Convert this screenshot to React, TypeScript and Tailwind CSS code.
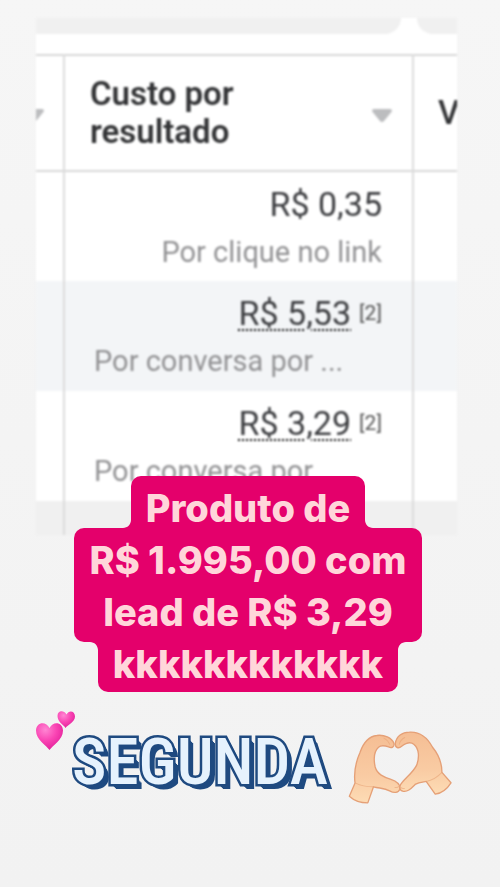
import React from 'react';

interface ResultRow {
  value: string;
  note?: string;
  description: string;
  truncated: boolean;
}

const ROWS: ResultRow[] = [
  { value: 'R$ 0,35', description: 'Por clique no link', truncated: false },
  { value: 'R$ 5,53', note: '[2]', description: 'Por conversa por ...', truncated: true },
  { value: 'R$ 3,29', note: '[2]', description: 'Por conversa por ...', truncated: true }
];

const SortArrow: React.FC = () => (
  <svg viewBox="0 0 20 13" className="mt-1 w-5 h-[13px] shrink-0" aria-hidden="true">
    <path d="M2 0h16c2 0 2.500 2 1 3.500L12 12c-1.200 1.200-2.800 1.200-4 0L1 3.500C-.5 2 0 0 2 0z" fill="#bcbdbf" />
  </svg>
);

/**
 * Ads results table, cut off at both sides
 */
const ResultsTable: React.FC = () => (
  <section className="ml-9 mr-[43px] overflow-hidden bg-white blur-[1px]">
    <div className="flex h-4 bg-white">
      <div className="flex-1 bg-[#f0f0f0] rounded-br-2xl" />
      <div className="w-4" />
      <div className="w-10 bg-[#f0f0f0] rounded-bl-2xl" />
    </div>
    <table className="mt-5 w-full table-fixed border-collapse font-[Roboto,sans-serif]">
      <colgroup>
        <col className="w-7" />
        <col />
        <col className="w-11" />
      </colgroup>
      <thead>
        <tr className="h-[116px] border-y-2 border-[#d8d8d8] text-[33px] leading-[38px] text-[#333436]">
          <td className="overflow-hidden border-r-2 border-[#dcdcdc]">
            <div className="flex justify-start -ml-3">
              <SortArrow />
            </div>
          </td>
          <th scope="col" className="border-r-2 border-[#dcdcdc] pl-[25px] pr-5 text-left font-semibold">
            <div className="flex items-center justify-between">
              <span>
                Custo por
                <br />
                resultado
              </span>
              <SortArrow />
            </div>
          </th>
          <th scope="col" className="overflow-hidden pl-6 text-left font-medium">V</th>
        </tr>
      </thead>
      <tbody>
        {ROWS.map((row) => (
          <tr key={row.value} className="h-[110px] even:bg-[#f3f5f7]">
            <td className="border-r-2 border-[#dcdcdc]" />
            <td className="border-r-2 border-[#dcdcdc] pl-[29px] pr-[30px] pt-0.5 text-right whitespace-nowrap">
              <div className="flex items-center justify-end gap-2 text-[34px] leading-[48px] text-[#3c3d40]">
                <span
                  className={
                    row.note
                      ? 'underline decoration-dotted decoration-2 decoration-black underline-offset-4'
                      : ''
                  }
                >
                  {row.value}
                </span>
                {row.note && <span className="text-[21px] text-[#555555]">{row.note}</span>}
              </div>
              <p
                className={
                  row.truncated
                    ? 'text-left text-[29px] leading-[48px] text-[#929294]'
                    : 'text-[29px] leading-[48px] text-[#929294]'
                }
              >
                {row.description}
              </p>
            </td>
            <td />
          </tr>
        ))}
      </tbody>
      <tfoot>
        <tr className="h-[34px] bg-[#f0f0f0]">
          <td className="border-r-2 border-[#dcdcdc]" />
          <td className="border-r-2 border-[#dcdcdc]" />
          <td />
        </tr>
      </tfoot>
    </table>
  </section>
);

/* Inner corner that joins a narrow line to the wider one next to it */
const Fillet: React.FC<{ className: string }> = ({ className }) => (
  <svg viewBox="0 0 8 8" className={`absolute w-2 h-2 ${className}`} aria-hidden="true">
    <path d="M8 0v8H0c4.400 0 8-3.600 8-8z" fill="#e4006b" />
  </svg>
);

const Caption: React.FC = () => (
  <div className="relative -mt-[59px] mr-1 flex flex-col items-center text-center font-[Inter,sans-serif] text-[38px] font-extrabold leading-[52px] text-[#ffd6da]">
    <div className="relative rounded-t-[10px] bg-[#e4006b] px-[15px] pt-1.5">
      Produto de
      <Fillet className="-left-2 bottom-1.5" />
      <Fillet className="-right-2 bottom-1.5 -scale-x-100" />
    </div>
    <div className="-mt-1.5 rounded-[10px] bg-[#e4006b] px-4 pt-1.5 pb-1">
      R$ 1.995,00 com
      <br />
      lead de R$ 3,29
    </div>
    <div className="relative -mt-1 rounded-b-[10px] bg-[#e4006b] px-[15px] pb-0.5">
      kkkkkkkkkkkk
      <Fillet className="-left-2 top-1 -scale-y-100" />
      <Fillet className="-right-2 top-1 -scale-100" />
    </div>
  </div>
);

const Hearts: React.FC = () => (
  <svg viewBox="0 0 40 40" className="w-10 h-10 shrink-0" role="img" aria-label="Dois corações">
    <defs>
      <radialGradient id="heart" cx="35%" cy="25%" r="80%">
        <stop offset="0" stopColor="#ff86d3" />
        <stop offset=".5" stopColor="#fa45b4" />
        <stop offset="1" stopColor="#e01d98" />
      </radialGradient>
    </defs>
    <path
      d="M13.500 40C11 36 0 30 0 20.500 0 12 10 10.500 13.500 18 17 10.500 27 12 27 20.500 27 30 16 36 13.500 40z"
      fill="url(#heart)"
    />
    <path
      d="M29.500 18C28 15 21.500 12 21.500 6 21.500 0 28 0 30.500 4.500 33-.5 39 1 39 6.500 39 12 31.500 15 29.500 18z"
      fill="url(#heart)"
    />
  </svg>
);

const HeartHands: React.FC = () => (
  <svg viewBox="30 32 310 220" className="w-[104px] h-[74px] shrink-0" role="img" aria-label="Mãos em coração">
    <defs>
      <linearGradient id="skin" x1="0" y1="0" x2="0" y2="1">
        <stop offset="0" stopColor="#f5be94" />
        <stop offset=".6" stopColor="#f9cba3" />
        <stop offset="1" stopColor="#fddcb5" />
      </linearGradient>
    </defs>
    <g fill="url(#skin)" stroke="#e5a077" strokeWidth="4" strokeLinejoin="round">
      <path d="M34 229L51 190C47 160 54 125 66 98C75 72 91 51 116 48C137 45 161 55 167 72C169 82 160 87 151 82C139 78 129 76 121 83C108 95 106 119 111 142C117 164 137 172 158 179C178 186 187 196 184 209C180 220 166 220 154 213C138 204 123 206 106 201L89 249C68 249 49 243 34 229z" />
      <path d="M337 189L310 158C310 131 300 105 282 83C267 55 243 36 213 38C192 38 174 50 171 72C170 85 181 88 190 80C202 71 216 66 226 74C243 87 243 116 234 138C225 156 207 170 193 186C182 197 181 210 193 214C208 218 219 205 230 194C242 187 252 187 263 185L290 223C308 220 325 208 337 189z" />
    </g>
    <g fill="none" stroke="#e7a477" strokeWidth="3" strokeLinecap="round" opacity=".6">
      <path d="M53 190c17 9 35 11 53 11" />
      <path d="M263 185c17-3 33-12 47-27" />
      <path d="M137 56c8 4 14 10 17 18M183 74c2-9 8-16 16-20" />
      <path d="M170 203c5 1 9 0 12-3M187 203c3 3 7 4 11 3" />
    </g>
  </svg>
);

const App: React.FC = () => {
  return (
    <main className="min-h-screen bg-linear-to-b from-[#f6f6f6] to-[#f2f2f2] pt-[18px] pb-20">
      <ResultsTable />
      <Caption />

      {/* Stickers */}
      <div className="mt-[18px] flex justify-center pr-3">
        <Hearts />
        <h1 className="mt-3 -ml-1 font-['Liberation_Sans_Narrow','Roboto_Condensed',Roboto,sans-serif] text-[65px] font-medium leading-[80px] text-[#e6f2fd] [-webkit-text-stroke:5px_#1f4a80] [paint-order:stroke_fill] [text-shadow:1px_1px_#1f4a80,2px_2px_#1f4a80,3px_3px_#1f4a80,4px_4px_#1f4a80,5px_5px_#1f4a80]">
          SEGUNDA
        </h1>
        <div className="mt-5 ml-5">
          <HeartHands />
        </div>
      </div>
    </main>
  );
};

export default App;
